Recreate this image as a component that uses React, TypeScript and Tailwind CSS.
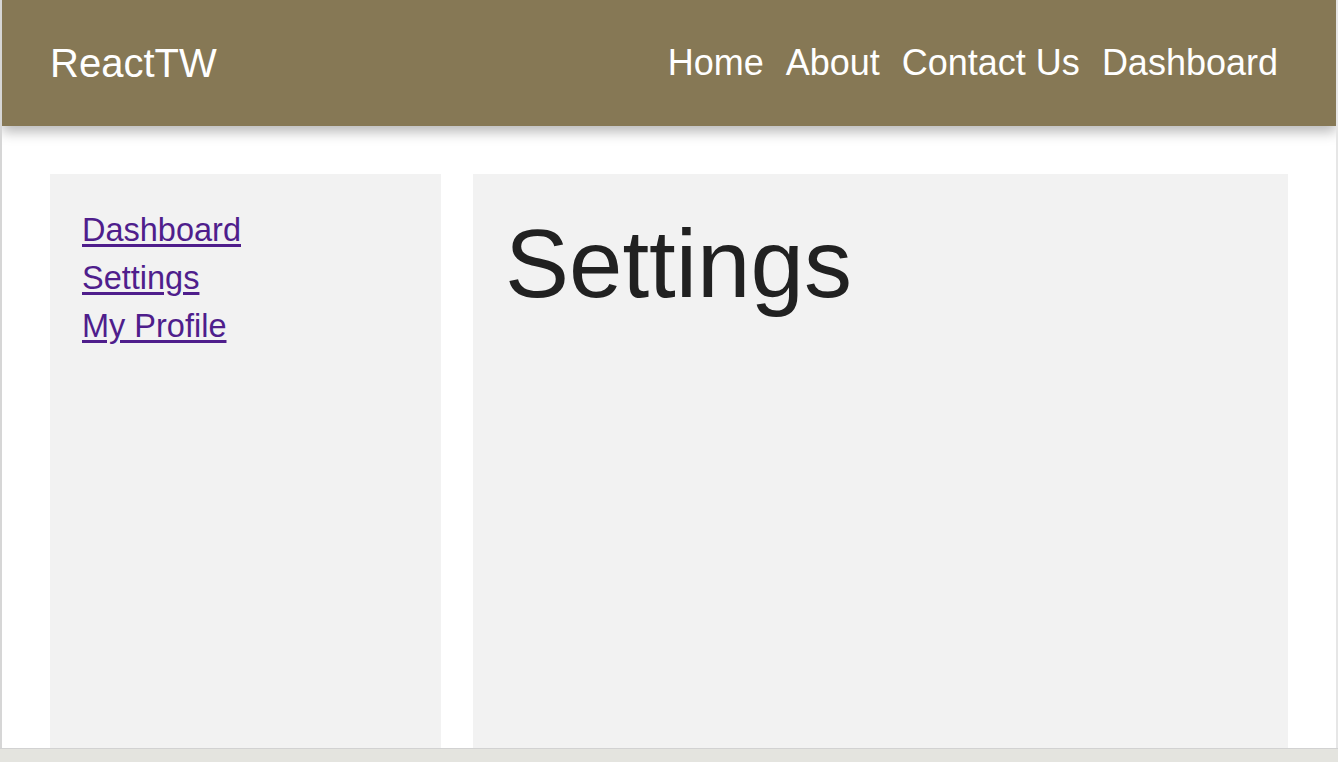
const navLinks = ["Home", "About", "Contact Us", "Dashboard"];
const sideLinks = ["Dashboard", "Settings", "My Profile"];

const Header: React.FC = () => (
  <header className="relative z-10 flex h-[126px] items-center justify-between bg-[#867855] pl-[48px] pr-[58px] shadow-[0_6px_12px_rgba(0,0,0,0.28)]">
    <a href="#" className="text-[40px] leading-none text-white">
      ReactTW
    </a>
    <nav className="flex items-center gap-[22px]">
      {navLinks.map((l) => (
        <a key={l} href="#" className="text-[36px] leading-none text-white">
          {l}
        </a>
      ))}
    </nav>
  </header>
);

export default function App() {
  return (
    <div className="flex h-[762px] flex-col bg-white font-['Liberation_Sans',Arial,sans-serif]">
      <div className="flex flex-1 flex-col overflow-hidden border-l-2 border-r-2 border-l-[#d6d6d6] border-r-[#e6e6e6]">
        <Header />
        {/* sidebar + main */}
        <div className="flex flex-1 gap-[32px] px-[48px] pt-[48px]">
          <aside className="flex w-[391px] flex-col bg-[#f2f2f2] p-[32px]">
            {sideLinks.map((l) => (
              <a
                key={l}
                href="#"
                className="w-fit text-[32.5px] leading-[48px] text-[#4f1e8c] underline underline-offset-[3px]"
              >
                {l}
              </a>
            ))}
          </aside>
          <main className="flex-1 bg-[#f2f2f2] p-[32px]">
            <h1 className="text-[96px] leading-[1.2] text-[#212121]">Settings</h1>
          </main>
        </div>
      </div>
      <div className="h-[14px] border-t border-[#d2d2d2] bg-[#e4e4df]" />
    </div>
  );
}
